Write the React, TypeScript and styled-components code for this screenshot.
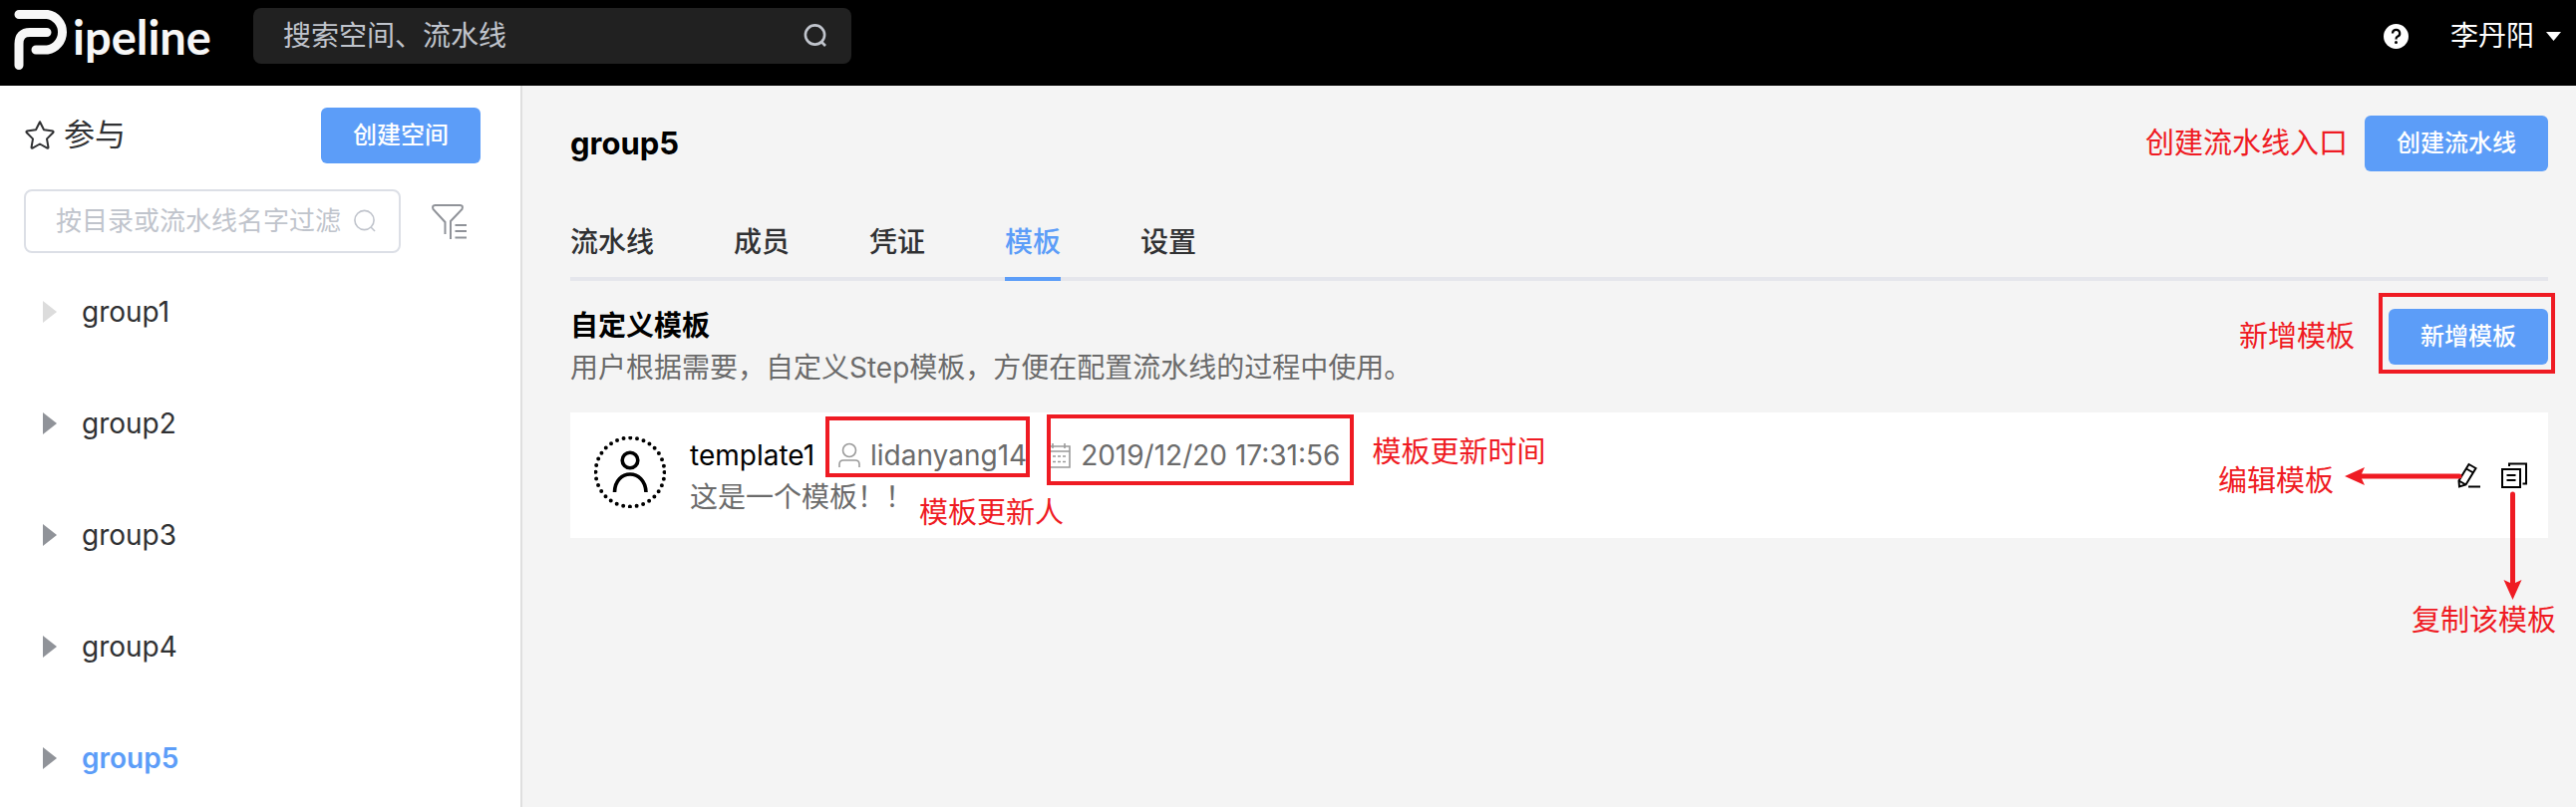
import React from "react";
import styled, { createGlobalStyle } from "styled-components";

const RED = "#ef1b23";
const BLUE = "#5c9df8";

const GlobalStyle = createGlobalStyle`
  *, *::before, *::after { box-sizing: border-box; }
  body {
    margin: 0;
    background: #f4f4f4;
    font-family: Inter, "Noto Sans CJK SC", sans-serif;
    font-size: 28px;
    line-height: 42px;
    color: #303133;
  }
  button, input { font: inherit; }
  h1, h2, p, ul { margin: 0; padding: 0; }
  svg { display: block; flex: none; }
`;

const Page = styled.div`
  display: flex;
  flex-direction: column;
  min-height: 100vh;
`;

const TopBar = styled.header`
  display: flex;
  align-items: flex-start;
  height: 86px;
  padding: 8px 14px;
  background: #000;
`;

const Brand = styled.a`
  display: flex;
  align-items: flex-start;
  gap: 2px;
  width: 240px;
  color: #f7f7f7;
  text-decoration: none;
`;

const BrandName = styled.span`
  font-family: Lato, sans-serif;
  font-weight: 700;
  font-size: 47px;
  line-height: 58px;
`;

const GlobalSearch = styled.label`
  display: flex;
  align-items: center;
  width: 600px;
  height: 56px;
  padding: 0 24px 0 30px;
  border-radius: 8px;
  background: #212121;
  color: #c0c4cc;
`;

const PlainInput = styled.input`
  flex: 1;
  min-width: 0;
  padding: 0;
  border: 0;
  outline: 0;
  background: transparent;
  color: inherit;
  &::placeholder { color: #c0c4cc; opacity: 1; }
`;

const Account = styled.div`
  display: flex;
  align-items: center;
  height: 56px;
  margin-left: auto;
  gap: 42px;
`;

const BareButton = styled.button`
  display: flex;
  align-items: center;
  gap: 12px;
  padding: 0;
  border: 0;
  background: transparent;
  color: inherit;
  cursor: pointer;
`;

const UserButton = styled(BareButton)`
  color: #fff;
`;

const Body = styled.div`
  display: flex;
  flex: 1;
`;

const Sidebar = styled.aside`
  flex: none;
  width: 524px;
  padding: 22px 40px 0 24px;
  border-right: 2px solid #dfdfdf;
  background: #fff;
`;

const SidebarHead = styled.div`
  display: flex;
  align-items: center;
  justify-content: space-between;
`;

const Joined = styled.h2`
  display: flex;
  align-items: center;
  gap: 8px;
  padding-bottom: 2px;
  font-weight: 400;
  font-size: 31px;
`;

const PrimaryButton = styled.button`
  height: 56px;
  padding: 0 32px;
  border: 0;
  border-radius: 6px;
  background: ${BLUE};
  color: #fff;
  font-size: 24px;
  font-weight: 500;
  line-height: 36px;
  white-space: nowrap;
  cursor: pointer;
`;

const FilterRow = styled.div`
  display: flex;
  align-items: center;
  gap: 30px;
  margin-top: 26px;
`;

const FilterBox = styled.label`
  display: flex;
  align-items: center;
  width: 378px;
  height: 64px;
  padding: 0 22px 0 30px;
  border: 2px solid #dcdfe6;
  border-radius: 8px;
  font-size: 26px;
  color: #c0c4cc;
`;

const Tree = styled.ul`
  padding: 4px 0 0 19px;
  list-style: none;
`;

const TreeItem = styled.li`
  height: 112px;
  padding-top: 34px;
`;

const TreeLink = styled.a<{ $active?: boolean }>`
  display: flex;
  align-items: center;
  gap: 25px;
  color: ${(p) => (p.$active ? BLUE : "#303133")};
  font-weight: ${(p) => (p.$active ? 600 : 400)};
  text-decoration: none;
`;

const Main = styled.main`
  flex: 1;
  min-width: 0;
  padding: 30px 28px 0 48px;
`;

const Heading = styled.div`
  display: flex;
  align-items: center;
  justify-content: space-between;
`;

const GroupName = styled.h1`
  font-size: 31px;
  font-weight: 700;
  color: #000;
`;

const Tabs = styled.nav`
  display: flex;
  gap: 80px;
  margin-top: 34px;
  border-bottom: 4px solid #e5e6ec;
`;

const Tab = styled.a<{ $active?: boolean }>`
  height: 76px;
  margin-bottom: -4px;
  padding-top: 16px;
  border-bottom: 4px solid ${(p) => (p.$active ? BLUE : "transparent")};
  color: ${(p) => (p.$active ? BLUE : "#303133")};
  font-weight: 500;
  text-decoration: none;
`;

const Section = styled.section`
  display: flex;
  align-items: flex-start;
  justify-content: space-between;
  padding: 24px 0;
`;

const SectionTitle = styled.h2`
  font-size: 28px;
  font-weight: 700;
  color: #000;
`;

const Muted = styled.p`
  color: #6b6b6b;
`;

const Actions = styled.div`
  display: flex;
  align-items: center;
  gap: 17px;
`;

const NoteGap = styled(Actions)`
  gap: 34px;
  padding-top: 4px;
`;

const Note = styled.span`
  color: ${RED};
  font-size: 29px;
  line-height: 42px;
  white-space: nowrap;
`;

const Framed = styled.div`
  position: relative;
  display: flex;
`;

const Frame = styled.span<{ $inset: string }>`
  position: absolute;
  inset: ${(p) => p.$inset};
  border: 4px solid ${RED};
  pointer-events: none;
`;

const Card = styled.article`
  display: flex;
  align-items: flex-start;
  height: 126px;
  padding: 20px 21px 20px 24px;
  background: #fff;
`;

const CardText = styled.div`
  position: relative;
  margin-left: 24px;
  margin-top: 2px;
`;

const CardLine = styled.div`
  display: flex;
  align-items: center;
  color: #6b6b6b;
`;

const TemplateName = styled.span`
  margin-right: 24px;
  color: #000;
`;

const Meta = styled.span`
  position: relative;
  display: flex;
  align-items: center;
  gap: 10px;
  margin-right: 20px;
  white-space: nowrap;
`;

const FloatingNote = styled(Note)<{ $left?: string; $right?: string; $top: string }>`
  position: absolute;
  top: ${(p) => p.$top};
  left: ${(p) => p.$left ?? "auto"};
  right: ${(p) => p.$right ?? "auto"};
`;

const CardActions = styled.div`
  position: relative;
  display: flex;
  gap: 20px;
  margin-left: auto;
  margin-top: 30px;
  color: #000;
`;

const ArrowLayer = styled.svg`
  position: absolute;
  top: 0;
  right: 0;
  pointer-events: none;
`;

const SearchIcon = ({ width }: { width: number }) => (
  <svg width="24" height="24" viewBox="0 0 24 24" fill="none" stroke="currentColor" strokeWidth={width} aria-hidden="true">
    <circle cx="11.500" cy="11" r="9.600" />
    <path d="M18 18L22 22" />
  </svg>
);

const Logo = () => (
  <svg width="57" height="64" viewBox="0 0 57 64" fill="none" stroke="#f7f7f7" strokeWidth="9" strokeLinecap="round" aria-hidden="true">
    <path d="M5 6.500H33.500A18 18 0 0 1 33.500 42H22" />
    <path d="M5 57.500V36Q5 24.500 16 24.500H33" />
  </svg>
);

const Star = () => (
  <svg width="32" height="32" viewBox="0 0 32 32" fill="none" stroke="#303133" strokeWidth="2" strokeLinejoin="round" aria-hidden="true">
    <path d="M16 3.200L20 11.300L29 12.600Q30 13.200 29.400 14L23 20.400L24.500 29Q24.400 30 23.300 29.600L16 25.500L8.700 29.600Q7.600 30 7.500 29L9 20.400L2.600 14Q2 13.200 3 12.600L12 11.300Z" />
  </svg>
);

const FilterIcon = () => (
  <svg width="36" height="36" viewBox="0 0 36 36" fill="none" stroke="#909399" strokeWidth="2" aria-hidden="true">
    <path d="M14.500 31V19L2.500 6Q1 2 4.500 2H29.500Q33 2 31.500 6L20 18V36" />
    <path d="M24.500 22H36M24.500 28H36M24.500 34.500H36" />
  </svg>
);

const Triangle = ({ color }: { color: string }) => (
  <svg width="14" height="22" viewBox="0 0 14 22" aria-hidden="true">
    <path d="M0 0L14 11L0 22Z" fill={color} />
  </svg>
);

const Help = () => (
  <svg width="25" height="25" viewBox="0 0 25 25" fill="none" aria-hidden="true">
    <circle cx="12.500" cy="12.500" r="12.500" fill="#fff" />
    <path d="M9 9.500A3.600 3.600 0 1 1 13.800 12.800Q12.500 13.300 12.500 15.500" stroke="#000" strokeWidth="2.200" />
    <circle cx="12.500" cy="18.500" r="1.500" fill="#000" />
  </svg>
);

const Avatar = () => (
  <svg width="72" height="72" viewBox="0 4 72 72" fill="none" stroke="#000" aria-hidden="true">
    <circle cx="36" cy="40" r="34.500" strokeWidth="4" strokeLinecap="round" strokeDasharray="0 6.775" />
    <circle cx="36" cy="28" r="7.800" strokeWidth="3.600" />
    <path d="M20.500 60C21 36 51 36 52 60" strokeWidth="3.600" />
  </svg>
);

const AvatarSlot = styled.div`
  padding-top: 4px;
`;

const UserIcon = () => (
  <svg width="22" height="26" viewBox="0 0 22 26" fill="none" stroke="#9b9b9b" strokeWidth="1.600" aria-hidden="true">
    <circle cx="11" cy="8" r="6.500" />
    <path d="M1 25V22Q1 18 5 18H17Q21 18 21 22V25" />
  </svg>
);

const CalendarIcon = () => (
  <svg width="24" height="26" viewBox="0 0 24 26" fill="none" stroke="#9b9b9b" strokeWidth="1.600" aria-hidden="true">
    <path d="M1 4H23V25H1ZM1 9H23M6 1V6M18 1V6" />
    <path d="M6 14H19M6 19.500H19" strokeDasharray="3 2" />
  </svg>
);

const Pencil = () => (
  <svg width="24" height="26" viewBox="0 0 24 26" fill="none" stroke="#000" strokeWidth="2" aria-hidden="true">
    <path d="M11.500 2L18.500 6L8.500 22.500L2 24.500L1.500 18.500ZM9 6.500L16 10.500M1.500 18.500L8.500 22.500" />
    <path d="M11 24.500H23" />
  </svg>
);

const Copy = () => (
  <svg width="26" height="26" viewBox="0 0 26 26" fill="none" stroke="#000" strokeWidth="2" aria-hidden="true">
    <path d="M1 7H19V25H1ZM5.500 13H14.500M5.500 18H14.500" />
    <path d="M8 4V1.500H25V21.500H21.500" />
  </svg>
);

const groups = ["group1", "group2", "group3", "group4", "group5"];
const tabs = ["流水线", "成员", "凭证", "模板", "设置"];

export default function App() {
  return (
    <Page>
      <GlobalStyle />
      <TopBar>
        <Brand href="#">
          <Logo />
          <BrandName>ipeline</BrandName>
        </Brand>
        <GlobalSearch>
          <PlainInput aria-label="搜索" placeholder="搜索空间、流水线" />
          <SearchIcon width={2.6} />
        </GlobalSearch>
        <Account>
          <BareButton aria-label="帮助"><Help /></BareButton>
          <UserButton>
            李丹阳
            <svg width="16" height="9" viewBox="0 0 16 9" aria-hidden="true"><path d="M0 0H15L7.500 9Z" fill="#fff" /></svg>
          </UserButton>
        </Account>
      </TopBar>
      <Body>
        <Sidebar>
          <SidebarHead>
            <Joined><Star />参与</Joined>
            <PrimaryButton>创建空间</PrimaryButton>
          </SidebarHead>
          <FilterRow>
            <FilterBox>
              <PlainInput aria-label="过滤" placeholder="按目录或流水线名字过滤" />
              <SearchIcon width={1.6} />
            </FilterBox>
            <BareButton aria-label="筛选"><FilterIcon /></BareButton>
          </FilterRow>
          <Tree>
            {groups.map((name, i) => (
              <TreeItem key={name}>
                <TreeLink href="#" $active={name === "group5"}>
                  <Triangle color={i === 0 ? "#dcdcdc" : "#909399"} />
                  {name}
                </TreeLink>
              </TreeItem>
            ))}
          </Tree>
        </Sidebar>
        <Main>
          <Heading>
            <GroupName>group5</GroupName>
            <Actions>
              <Note>创建流水线入口</Note>
              <PrimaryButton>创建流水线</PrimaryButton>
            </Actions>
          </Heading>
          <Tabs>
            {tabs.map((name) => (
              <Tab key={name} href="#" $active={name === "模板"}>{name}</Tab>
            ))}
          </Tabs>
          <Section>
            <div>
              <SectionTitle>自定义模板</SectionTitle>
              <Muted>用户根据需要，自定义Step模板，方便在配置流水线的过程中使用。</Muted>
            </div>
            <NoteGap>
              <Note>新增模板</Note>
              <Framed>
                <PrimaryButton>新增模板</PrimaryButton>
                <Frame $inset="-16px -7px -9px -10px" />
              </Framed>
            </NoteGap>
          </Section>
          <Card>
            <AvatarSlot><Avatar /></AvatarSlot>
            <CardText>
              <CardLine>
                <TemplateName>template1</TemplateName>
                <Meta>
                  <UserIcon />lidanyang14
                  <Frame $inset="-18px -3px -1px -13px" />
                  <FloatingNote $top="58px" $left="81px">模板更新人</FloatingNote>
                </Meta>
                <Meta>
                  <CalendarIcon />2019/12/20 17:31:56
                  <Frame $inset="-20px -14px -9px 0" />
                  <FloatingNote $top="-3px" $left="calc(100% + 32px)">模板更新时间</FloatingNote>
                </Meta>
              </CardLine>
              <Muted>这是一个模板！！</Muted>
            </CardText>
            <CardActions>
              <BareButton aria-label="编辑模板"><Pencil /></BareButton>
              <BareButton aria-label="复制该模板"><Copy /></BareButton>
              <ArrowLayer width="184" height="140" viewBox="0 0 184 140" fill={RED} aria-hidden="true">
                <path d="M1 14L21 5L18 11.500H116A2.500 2.500 0 0 1 116 16.500H18L21 23Z" />
                <path d="M169.500 138L160.500 118L167 121V32A2.500 2.500 0 0 1 172 32V121L178.500 118Z" />
              </ArrowLayer>
              <FloatingNote $top="-2px" $right="194px">编辑模板</FloatingNote>
              <FloatingNote $top="138px" $right="-29px">复制该模板</FloatingNote>
            </CardActions>
          </Card>
        </Main>
      </Body>
    </Page>
  );
}
